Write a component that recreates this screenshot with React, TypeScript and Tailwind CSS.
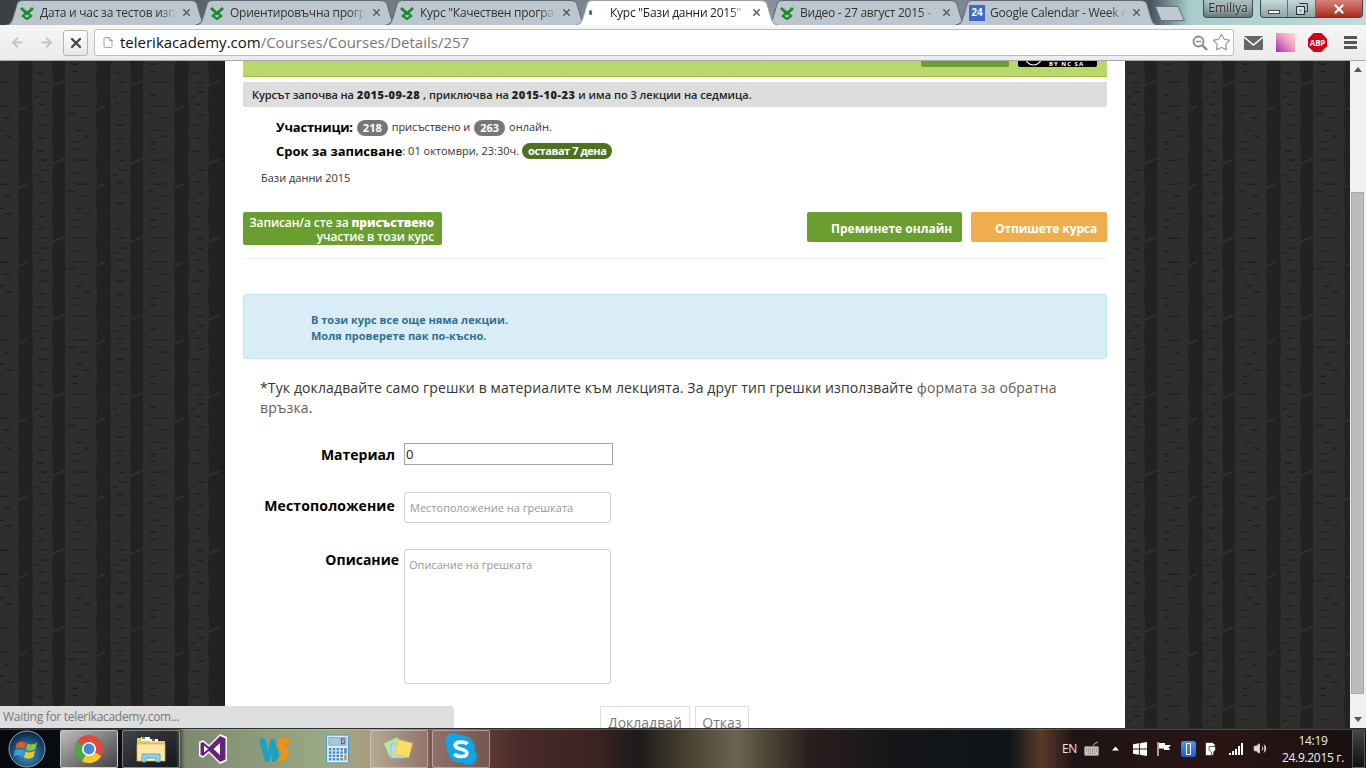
import { X, ArrowLeft, ArrowRight, File, Star, Volume2 } from 'lucide-react';

const tabs = [
    { title: 'Дата и час за тестов изпит', icon: 'tk' },
    { title: 'Ориентировъчна програма', icon: 'tk' },
    { title: 'Курс "Качествен програмен', icon: 'tk' },
    { title: 'Курс "Бази данни 2015" - Te', icon: 'dot', active: true },
    { title: 'Видео - 27 август 2015 - Tel', icon: 'tk' },
    { title: 'Google Calendar - Week of', icon: 'cal' },
];

const TelerikIcon = () => (
    <svg viewBox="0 0 16 14" className="w-4 h-[14px] shrink-0">
        <path d="M2 2 L8 7.5 L14 2" fill="none" stroke="#1d8a2c" strokeWidth="3" />
        <path d="M8 6.5 L12.2 10 L8 13 L3.8 10 Z" fill="none" stroke="#1d8a2c" strokeWidth="2.2" />
    </svg>
);

const Tab = ({ title, icon, active }: { title: string; icon: string; active?: boolean }) => (
    <div className={`relative w-[190px] h-full flex items-center pl-[7px] pr-[10px] gap-[5px] shrink-0 ${active ? 'z-10' : ''}`}>
        <svg viewBox="0 0 204 24" preserveAspectRatio="none" className="absolute top-0 -left-[7px] w-[204px] h-full">
            <path
                d="M0.5 24 C6 24 7 20 9 14 L12 4 C13 1 15 0.5 18 0.5 L184 0.5 C189 0.5 191 1 192 4 L195 14 C197 20 198 24 203.5 24"
                fill={active ? '#ffffff' : '#bcc6cf'}
                stroke={active ? '#9aa0a6' : '#5d6a76'}
                strokeWidth="1"
            />
        </svg>
        <div className="relative shrink-0 w-4 h-4 flex items-center justify-start">
            {icon === 'tk' && <TelerikIcon />}
            {icon === 'dot' && <span className="w-[3px] h-[5px] bg-[#2a6fc9] rounded-full" />}
            {icon === 'cal' && (
                <span className="w-4 h-4 bg-[#3d6ac6] text-white text-[10px] leading-4 font-bold text-center [font-family:'Liberation_Sans',sans-serif]">24</span>
            )}
        </div>
        <span className={`relative flex-1 overflow-hidden whitespace-nowrap text-[12px] tracking-[-0.25px] [mask-image:linear-gradient(to_right,black_88%,transparent)] ${active ? 'text-[#222]' : 'text-[#333]'}`}>{title}</span>
        <X className="relative w-[11px] h-[11px] text-[#555] shrink-0" strokeWidth={3} />
    </div>
);

// crescents on the trunks of the wallpaper tile: x, y, half width
const marks: [number, number, number][] = [
    [75, 2, 5], [81, 20, 10], [75, 9, 5], [75, 33, 5], [81, 44, 10], [72, 51, 5], [85, 56, 5], [79, 68, 5], [87, 74, 5],
    [118, 11, 5], [122, 20, 5], [115, 35, 3], [123, 30, 5], [120, 42, 5], [123, 53, 5], [120, 63, 6], [120, 76, 5],
];

const Bark = ({ id, shift }: { id: string; shift: number }) => (
    <svg className="block w-full h-full">
        <defs>
            <pattern id={id} width="78" height="78" patternUnits="userSpaceOnUse" patternTransform={`translate(${shift} 0)`}>
                <rect width="78" height="78" fill="#222222" />
                <path d="M-13 0 L19 0 L18 20 L19 40 L18 60 L19 78 L-13 78 Z" fill="#2e2e2e" />
                <path d="M65 0 L97 0 L96 20 L97 40 L96 60 L97 78 L65 78 Z" fill="#2e2e2e" />
                <path d="M33 0 L52 0 L53 18 L52 40 L53 60 L52 78 L32 78 L33 50 L32 30 Z" fill="#2e2e2e" />
                <path d="M19 49 L27 45 M-10 75 L1 81 M-10 -3 L1 3 M52 25 L64 20" stroke="#2e2e2e" strokeWidth="2" fill="none" />
                <g fill="#1b1b1b">
                    {marks.map(([x, y, w], i) => (
                        <g key={i}>
                            <path d={`M${x - w} ${y} Q${x} ${y + 4} ${x + w} ${y} Q${x} ${y + 1.4} ${x - w} ${y} Z`} />
                            <path d={`M${x - w - 78} ${y} Q${x - 78} ${y + 4} ${x + w - 78} ${y} Q${x - 78} ${y + 1.4} ${x - w - 78} ${y} Z`} />
                        </g>
                    ))}
                </g>
            </pattern>
        </defs>
        <rect width="100%" height="100%" fill={`url(#${id})`} />
    </svg>
);

const ChromeIcon = () => (
    <svg viewBox="0 0 32 32" className="w-[30px] h-[30px]">
        <circle cx="16" cy="16" r="15" fill="#dd4b3e" />
        <path d="M16 16 L29 23.5 A15 15 0 0 1 8.5 29 Z" fill="#f8c92f" />
        <path d="M16 16 L8.5 29 A15 15 0 0 1 3 8.5 Z" fill="#4aa84a" />
        <circle cx="16" cy="16" r="7.5" fill="#fff" />
        <circle cx="16" cy="16" r="5.8" fill="#4a88d8" />
    </svg>
);

const WinOrb = () => (
    <svg viewBox="0 0 38 38" className="w-[38px] h-[38px]">
        <defs>
            <radialGradient id="orb" cx="50%" cy="65%" r="60%">
                <stop offset="0%" stopColor="#3f9bd0" />
                <stop offset="100%" stopColor="#0c2a4a" />
            </radialGradient>
        </defs>
        <circle cx="19" cy="19" r="18" fill="url(#orb)" stroke="#8fa6b8" strokeWidth="1" />
        <path d="M9 13 Q13 10 18 13 L16.5 19 Q12 16.5 7.5 19 Z" fill="#e8572a" />
        <path d="M19.5 13.5 Q24 16 29 12.5 L27.5 19 Q23 22 18 19.5 Z" fill="#8cc63f" />
        <path d="M7 20.5 Q12 18 16 21 L14.5 27 Q10 24 5.5 26.5 Z" fill="#35a3e0" />
        <path d="M17.5 21.5 Q22 24 27 20.5 L25.5 27 Q21 30 16 27.5 Z" fill="#f7c520" />
    </svg>
);

const ExplorerIcon = () => (
    <svg viewBox="0 0 32 32" className="w-8 h-8">
        <path d="M2 5 H14 L16 8 H30 V26 H2 Z" fill="#e9c66b" />
        <rect x="6" y="4" width="9" height="4" fill="#fff" />
        <rect x="7" y="4" width="3" height="2" fill="#4caf50" />
        <rect x="15" y="6" width="8" height="3" fill="#fff" />
        <rect x="17" y="6" width="3" height="2" fill="#d0402c" />
        <rect x="2" y="11" width="28" height="17" fill="#fbe6a2" stroke="#cfae5c" strokeWidth="0.7" />
        <path d="M7 29 V21 H25 V29 H21 V25 H11 V29 Z" fill="#8ed0ee" stroke="#4f9ccc" strokeWidth="0.8" />
    </svg>
);

const VsIcon = () => (
    <svg viewBox="0 0 32 32" className="w-8 h-8">
        <path d="M23 1 L30 4 V28 L23 31 L12 20 L6 25 L2 23 V9 L6 7 L12 12 Z" fill="#fff" />
        <path d="M23 3 L28.5 5.5 V26.5 L23 29 L12 18 L6 23 L3.5 22 V10 L6 9 L12 14 Z" fill="#68217a" />
        <path d="M7 12.5 V19.5 L11 16 Z M23 10 L16.5 16 L23 22 Z" fill="#fff" />
    </svg>
);

const WsIcon = () => (
    <svg viewBox="0 0 32 32" className="w-8 h-8">
        <path d="M0 6 L6 5 L9 18 L11 6 H16 L18 18 L19 13 L20 24 L17 29 H13 L12 20 L10 29 H6 Z" fill="#1ba3c6" />
        <path d="M20 6 Q22 4 31 5 L30 10 H25 Q24 12 26 13 Q31 16 29 23 Q27 29 17 29 L20 24 Q24 23 23 20 Q18 16 19 11 Q19 8 20 6 Z" fill="#f29111" />
    </svg>
);

const CalcIcon = () => (
    <svg viewBox="0 0 24 30" className="w-[23px] h-[30px]">
        <rect x="0.5" y="0.5" width="23" height="29" rx="1" fill="#d9ecf8" stroke="#4a8fc4" />
        <rect x="3" y="3" width="18" height="8" fill="#a9c6da" stroke="#5f7f96" strokeWidth="0.5" />
        <rect x="16" y="4.5" width="3" height="5" fill="none" stroke="#2e4252" strokeWidth="0.8" />
        <g fill="#4b88b8">
            {[14, 17.5, 21, 24.5].map(y => [3, 7, 11, 15].map(x => <rect key={`${x}-${y}`} x={x} y={y} width="2.6" height="2.4" />))}
            <rect x="19" y="14" width="2.6" height="5.8" />
        </g>
        <rect x="19" y="21" width="2.6" height="5.9" fill="#ea8b2c" />
    </svg>
);

const NotesIcon = () => (
    <svg viewBox="0 0 32 32" className="w-8 h-8">
        <rect x="3" y="7" width="15" height="15" fill="#b9e6a4" stroke="#9ccf86" strokeWidth="0.7" transform="rotate(-24 10 14)" />
        <rect x="8" y="11" width="14" height="14" fill="#b6dcf2" stroke="#8cbcdc" strokeWidth="0.7" />
        <rect x="13" y="8" width="15" height="15" fill="#fbdc68" stroke="#e6c144" strokeWidth="0.7" transform="rotate(15 20 15)" />
    </svg>
);

const SkypeIcon = () => (
    <svg viewBox="0 0 32 32" className="w-[34px] h-[34px]">
        <circle cx="9" cy="9" r="8" fill="#12a5e6" />
        <circle cx="23" cy="23" r="8" fill="#12a5e6" />
        <circle cx="16" cy="16" r="13" fill="#12a5e6" />
        <path d="M22 11.5 C20 9 11 8.5 10.5 12.5 C10 17 21.5 15 21.5 20 C21.5 24 12 24 9.8 20.5" fill="none" stroke="#fff" strokeWidth="3.4" />
    </svg>
);

const Pill = ({ children, dark }: { children: string; dark?: boolean }) => (
    <span className={`inline-block rounded-[10px] text-white font-bold text-[11px] leading-[16px] ${dark ? 'bg-[#4e7121] px-[6px] tracking-[-0.45px]' : 'bg-[#777] px-[6px]'}`}>{children}</span>
);

export default function App() {
    return (
        <div className="w-[1366px] h-[768px] overflow-hidden flex flex-col relative font-['Open_Sans',sans-serif] bg-white">
            {/* tab strip */}
            <div className="h-[25px] shrink-0 relative flex pl-[12px] bg-[linear-gradient(90deg,#3b3f44_0,#6d757c_300px,#8d99a3_900px,#48525c_1150px,#a8cccc_1190px,#c3dbd9_1366px)]">
                {tabs.map(t => (
                    <Tab key={t.title} title={t.title} icon={t.icon} active={t.active} />
                ))}
                <svg viewBox="0 0 30 15" className="w-[30px] h-[15px] ml-[3px] mt-[6px] shrink-0">
                    <path d="M0.5 0.5 H23 L29.5 14.5 H6 Z" fill="#c0cad3" stroke="#67737d" strokeLinejoin="round" />
                </svg>
                <div className="absolute top-0 right-[3px] flex items-start gap-[7px]">
                    <div className="w-[50px] h-[18px] rounded-b-[4px] border border-t-0 border-[#3c4a4e] bg-gradient-to-b from-[#b0c2c2] to-[#667878] text-[#222] text-[12px] leading-[16px] text-center [text-shadow:0_0_3px_#fff]">Emiliya</div>
                    <div className="flex w-[103px] h-[18px] rounded-b-[4px] border border-t-0 border-[#3c4a4e] overflow-hidden bg-gradient-to-b from-[#c6d8d8] to-[#8ea4a4]">
                        <div className="w-[27px] flex items-end justify-center pb-[3px] border-r border-[#5d7276]">
                            <span className="w-[12px] h-[4px] bg-white border border-[#445]" />
                        </div>
                        <div className="w-[28px] flex items-center justify-center border-r border-[#5d7276]">
                            <svg viewBox="0 0 12 12" className="w-[12px] h-[12px]">
                                <path d="M3.5 0.5 H11.5 V8.5 H9 M0.5 3.5 H8.5 V11.5 H0.5 Z" fill="none" stroke="#334" strokeWidth="1" />
                                <path d="M2 5 H7 V10 H2 Z" fill="none" stroke="#fff" strokeWidth="1" />
                            </svg>
                        </div>
                        <div className="flex-1 bg-gradient-to-b from-[#d8817a] to-[#a8261c] flex items-center justify-center">
                            <X className="w-[14px] h-[14px] text-white" strokeWidth={4} />
                        </div>
                    </div>
                </div>
            </div>

            {/* toolbar */}
            <div className="h-[36px] shrink-0 bg-gradient-to-b from-[#f6f6f6] to-[#ebebeb] border-b border-[#a9a9a9] flex items-center pl-[10px] relative">
                <ArrowLeft className="w-[15px] h-[15px] text-[#c4c4c4]" strokeWidth={3} />
                <ArrowRight className="w-[15px] h-[15px] text-[#c4c4c4] ml-[14px]" strokeWidth={3} />
                <div className="ml-[9px] w-[25px] h-[26px] rounded-[3px] border border-[#b5b5b5] bg-gradient-to-b from-white to-[#e8e8e8] flex items-center justify-center shrink-0">
                    <X className="w-[16px] h-[16px] text-[#444]" strokeWidth={3.5} />
                </div>
                <div className="ml-[6px] h-[27px] w-[1140px] bg-white border border-[#bdbdbd] rounded-[2px] flex items-center shrink-0 pl-[7px] pr-[2px]">
                    <File className="w-[12px] h-[15px] text-[#8a8a8a]" strokeWidth={1.6} />
                    <span className="ml-[6px] text-[15px] text-[#111]">telerikacademy.com<span className="text-[#777]">/Courses/Courses/Details/257</span></span>
                    <span className="flex-1" />
                    <svg viewBox="0 0 16 16" className="w-[16px] h-[16px]">
                        <circle cx="6.5" cy="6.5" r="5" fill="none" stroke="#8a8a8a" strokeWidth="1.8" />
                        <path d="M3.8 6.5 H9.2" stroke="#8a8a8a" strokeWidth="1.4" />
                        <path d="M10.5 10.5 L15 15" stroke="#8a8a8a" strokeWidth="2.4" />
                    </svg>
                    <Star className="w-[19px] h-[19px] text-[#999] ml-[4px]" strokeWidth={1.5} />
                </div>
                <svg viewBox="0 0 19 14" className="ml-[10px] w-[19px] h-[14px] shrink-0">
                    <rect width="19" height="14" fill="#666" />
                    <path d="M0 1 L9.5 9 L19 1" fill="none" stroke="#fff" strokeWidth="1.6" />
                </svg>
                <div className="ml-[13px] w-[19px] h-[19px] shrink-0 bg-gradient-to-bl from-[#fde0d0] via-[#ee8fc0] to-[#9b2aa5]" />
                <div className="ml-[13px] w-[19px] h-[19px] shrink-0 bg-[#d3001b] [clip-path:polygon(30%_0,70%_0,100%_30%,100%_70%,70%_100%,30%_100%,0_70%,0_30%)] text-white text-[8px] font-bold leading-[19px] text-center tracking-[-0.2px]">ABP</div>
                <div className="ml-[17px] w-[13px] flex flex-col gap-[2px] shrink-0">
                    <span className="h-[3px] bg-[#555]" />
                    <span className="h-[3px] bg-[#555]" />
                    <span className="h-[3px] bg-[#555]" />
                </div>
            </div>

            {/* page */}
            <div className="flex-1 min-h-0 flex relative">
                <div className="w-[225px] h-full relative">
                    <Bark id="bark-l" shift={0} />
                    <div className="absolute top-0 right-0 h-full w-[6px] bg-gradient-to-r from-transparent to-[#111]/70" />
                </div>

                <div className="w-[900px] h-full bg-white overflow-hidden px-[18px]">
                    <div className="h-[16px] bg-[#b9d86b] border-b border-[#9cc23c] flex justify-end items-start pr-[10px] gap-[9px]">
                        <div className="w-[88px] h-[6px] bg-[#6a9e33] rounded-b-[2px]" />
                        <div className="w-[79px] h-[6px] bg-black rounded-b-[2px] overflow-hidden relative flex items-end pl-[7px]">
                            <svg viewBox="0 0 17 6" className="w-[17px] h-[6px] shrink-0">
                                <path d="M0.5 0 A8 8 0 0 0 16.5 0" fill="none" stroke="#fff" strokeWidth="1.2" transform="translate(0 -4)" />
                            </svg>
                            <span className="ml-[7px] text-white text-[6px] leading-[6px] tracking-[1px] whitespace-nowrap font-bold">BY NC SA</span>
                        </div>
                    </div>
                    <div className="mt-[5px] h-[25px] bg-[#dddddd] rounded-b-[2px] flex items-center pl-[9px] pt-[2px] text-[11px] font-semibold text-[#222]">
                        <span className="tracking-[-0.1px]">Курсът започва на</span>&nbsp;<b className="tracking-[0.5px]">2015-09-28</b>&nbsp;, приключва на&nbsp;<b className="tracking-[0.5px]">2015-10-23</b>&nbsp;и има по 3 лекции на седмица.
                    </div>

                    <div className="mt-[11px] pl-[33px] h-[19px] flex items-center gap-[4px] text-[11px] text-[#333]">
                        <b className="text-[13px] text-black tracking-[-0.2px]">Участници:</b>
                        <Pill>218</Pill> <span className="tracking-[-0.1px]">присъствено и</span> <Pill>263</Pill> онлайн.
                    </div>
                    <div className="mt-[5px] pl-[33px] h-[19px] flex items-center text-[11px] text-[#333]">
                        <b className="text-[13px] text-black">Срок за записване</b>: 01 октомври, 23:30ч.
                        <span className="ml-[3px]"><Pill dark>остават 7 дена</Pill></span>
                    </div>
                    <div className="mt-[8px] pl-[18px] h-[18px] leading-[18px] text-[11px] text-[#333]">Бази данни 2015</div>

                    <div className="mt-[25px] flex items-start">
                        <div className="w-[199px] h-[33px] bg-[#6a9e2f] rounded-[2px] text-white text-[12px] leading-[14px] font-semibold text-right pt-[4px] pr-[8px] tracking-[-0.1px]">
                            Записан/а сте за <b>присъствено</b><br />участие в този курс
                        </div>
                        <span className="flex-1" />
                        <div className="w-[155px] h-[30px] bg-[#6a9e2f] rounded-[2px] text-white text-[12px] font-bold leading-[33px] pl-[24px]">Преминете онлайн</div>
                        <div className="ml-[9px] w-[136px] h-[30px] bg-[#f0ad4e] rounded-[2px] text-white text-[12px] font-bold leading-[33px] pl-[24px] tracking-[-0.1px]">Отпишете курса</div>
                    </div>

                    <div className="mt-[13px] border-t border-[#f0f0f0]" />

                    <div className="mt-[35px] h-[65px] bg-[#d9edf7] border border-[#bce8f1] rounded-[3px] pl-[67px] pt-[17px] text-[11px] leading-[16px] font-bold text-[#31708f]">
                        В този курс все още няма лекции.<br />Моля проверете пак по-късно.
                    </div>

                    <p className="mt-[19px] pl-[17px] pr-[30px] text-[14px] leading-[20px] text-[#333] tracking-[0.12px]">
                        *Тук докладвайте само грешки в материалите към лекцията. За друг тип грешки използвайте <span className="text-[#6b5b52]">формата за обратна връзка</span>.
                    </p>

                    <div className="mt-[25px] flex items-center h-[22px]">
                        <b className="w-[153px] text-right text-[14px] text-black pr-[1px]">Материал</b>
                        <input readOnly value="0" className="ml-[8px] w-[209px] h-[22px] border border-[#a3a3a3] px-[1px] text-[13px] text-[#222] outline-none" />
                    </div>
                    <div className="mt-[27px] flex items-start h-[31px]">
                        <b className="w-[153px] text-right text-[14px] text-black mt-[3px] pr-[1px] tracking-[0.15px]">Местоположение</b>
                        <input readOnly placeholder="Местоположение на грешката" className="ml-[8px] w-[207px] h-[31px] border border-[#d4d4d4] rounded-[3px] px-[5px] text-[11px] placeholder:text-[#999] outline-none" />
                    </div>
                    <div className="mt-[26px] flex items-start">
                        <b className="w-[156px] text-right text-[14px] text-black">Описание</b>
                        <textarea readOnly placeholder="Описание на грешката" className="ml-[5px] w-[207px] h-[135px] border border-[#d4d4d4] rounded-[3px] px-[4px] py-[7px] text-[11px] placeholder:text-[#999] outline-none resize-none" />
                    </div>
                    <div className="mt-[22px] flex pl-[357px] gap-[5px] text-[14px] text-[#777]">
                        <div className="w-[90px] h-[30px] border border-[#ddd] text-center leading-[32px]">Докладвай</div>
                        <div className="w-[54px] h-[30px] border border-[#ddd] text-center leading-[32px]">Отказ</div>
                    </div>
                </div>

                <div className="w-[225px] h-full relative">
                    <Bark id="bark-r" shift={-33} />
                </div>

                <div className="w-[16px] h-full bg-[#f1f1f1] flex flex-col items-center justify-between py-[6px]">
                    <svg viewBox="0 0 8 5" className="w-[8px] h-[5px]"><path d="M0 5 L4 0 L8 5 Z" fill="#555" /></svg>
                    <div className="absolute top-[131px] right-[2px] w-[13px] h-[502px] bg-[#bcbcbc] border border-[#a8a8a8]" />
                    <svg viewBox="0 0 8 5" className="w-[8px] h-[5px]"><path d="M0 0 L4 5 L8 0 Z" fill="#555" /></svg>
                </div>

                {/* loading status bubble */}
                <div className="absolute left-0 bottom-0 w-[454px] h-[22px] bg-[#dedede] rounded-tr-[4px] text-[12px] leading-[22px] pl-[3px] text-[#777] tracking-[-0.3px]">Waiting for telerikacademy.com...</div>
            </div>

            {/* windows taskbar */}
            <div className="h-[40px] shrink-0 border-t border-[#2c2c2c] flex items-center text-white shadow-[inset_0_1px_0_rgba(255,255,255,0.2)] bg-[linear-gradient(90deg,#060a10_0,#0a0f16_175px,#7d8a70_185px,#9caa86_330px,#a89c80_370px,#7d5a50_430px,#4a2a2a_520px,#3a2222_600px,#1c1a1a_638px,#4a4434_690px,#6c6450_737px,#4a4434_770px,#2a1e1e_810px,#141518_900px,#10151a_1010px,#5a3a28_1041px,#1e1416_1073px,#2a1414_1230px,#15110f_1366px)]">
                <div className="w-[60px] pl-[8px] shrink-0"><WinOrb /></div>
                <div className="w-[58px] h-[38px] border border-[#dcdcdc]/80 rounded-[2px] bg-gradient-to-br from-[#bdbdbd] to-[#444] flex items-center justify-center shrink-0"><ChromeIcon /></div>
                <div className="ml-[4px] w-[58px] h-[38px] border border-[#dcdcdc]/50 rounded-[2px] bg-gradient-to-br from-[#666]/60 to-[#222]/40 flex items-center justify-center shrink-0"><ExplorerIcon /></div>
                <div className="ml-[4px] w-[58px] flex justify-center shrink-0"><VsIcon /></div>
                <div className="ml-[4px] w-[58px] flex justify-center shrink-0"><WsIcon /></div>
                <div className="ml-[4px] w-[58px] flex justify-center shrink-0"><CalcIcon /></div>
                <div className="ml-[4px] w-[58px] h-[38px] border border-[#dcdcdc]/50 rounded-[2px] bg-white/15 flex items-center justify-center shrink-0"><NotesIcon /></div>
                <div className="ml-[4px] w-[58px] h-[38px] border border-[#dcdcdc]/50 rounded-[2px] bg-white/15 flex items-center justify-center shrink-0"><SkypeIcon /></div>
                <span className="flex-1" />
                <span className="w-[14px] text-[12px] text-[#e8e8e8] tracking-[-0.5px]">EN</span>
                <svg viewBox="0 0 15 15" className="ml-[8px] w-[15px] h-[15px]">
                    <path d="M9 5 Q10 2 14 1" fill="none" stroke="#bbb" strokeWidth="1" />
                    <rect x="0.5" y="5.5" width="14" height="9" rx="1" fill="#c4c4c4" stroke="#999" strokeWidth="0.5" />
                    <path d="M2 8 H13 M2 10 H13 M4 12.4 H11" stroke="#777" strokeWidth="1" strokeDasharray="1 1" />
                </svg>
                <svg viewBox="0 0 10 6" className="ml-[13px] w-[7px] h-[5px]"><path d="M0 6 L5 0 L10 6 Z" fill="#fff" /></svg>
                <svg viewBox="0 0 16 16" className="ml-[14px] w-[14px] h-[14px]"><path d="M0 2.5 L6.8 1.5 V7.5 H0 Z M7.8 1.4 L16 0 V7.5 H7.8 Z M0 8.5 H6.8 V14.5 L0 13.5 Z M7.8 8.5 H16 V16 L7.8 14.6 Z" fill="#fff" /></svg>
                <svg viewBox="0 0 14 14" className="ml-[10px] w-[14px] h-[14px]">
                    <path d="M1 0 V14" stroke="#fff" strokeWidth="1.2" />
                    <path d="M2 1 H8 V3 L14 3 L11.5 5.5 L13 8 H7 V6.5 H2 Z" fill="#fff" />
                </svg>
                <div className="ml-[10px] w-[15px] h-[16px] rounded-[3px] bg-gradient-to-b from-[#4d94f0] to-[#1c5fd0] flex items-center justify-center"><span className="w-[5px] h-[12px] border border-white" /></div>
                <svg viewBox="0 0 13 15" className="ml-[9px] w-[13px] h-[15px]">
                    <path d="M0.5 1.5 H8 L9 3 V14.5 H0.5 Z" fill="#fff" stroke="#111" strokeWidth="0.6" />
                    <path d="M5.5 5 V3 M9 5 V3" stroke="#fff" strokeWidth="1.3" />
                    <path d="M4 5.5 H10.5 V9 L8.5 11 V14 H6.5 V11 L4 9 Z" fill="#fff" stroke="#111" strokeWidth="0.6" />
                </svg>
                <svg viewBox="0 0 14 12" className="ml-[11px] w-[14px] h-[12px]"><path d="M0 10h2v2H0z M3 8h2v4H3z M6 6h2v6H6z M9 3h2v9H9z M12 0h2v12h-2z" fill="#fff" /></svg>
                <Volume2 className="ml-[10px] w-[14px] h-[15px] text-[#ddd] fill-[#ddd]" strokeWidth={1.5} />
                <div className="ml-[9px] w-[74px] text-center text-[12px] leading-[17px] text-[#eee] whitespace-nowrap tracking-[-0.3px]">14:19<br />24.9.2015 г.</div>
                <div className="ml-[2px] w-[13px] h-[38px] border border-[#777]/60 bg-gradient-to-b from-[#444] to-[#111] mr-[1px]" />
            </div>
        </div>
    );
}
